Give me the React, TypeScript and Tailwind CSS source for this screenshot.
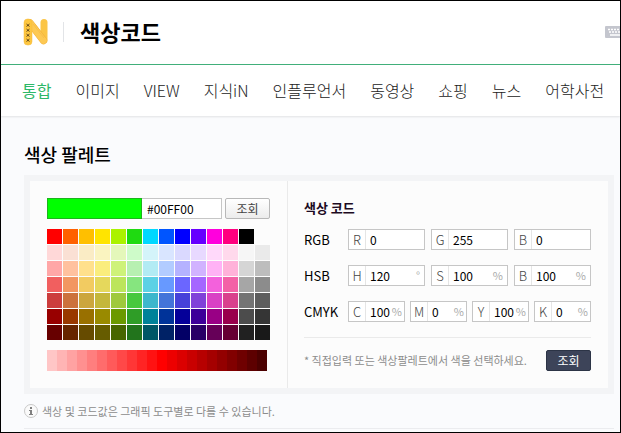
import { useState } from 'react'
import clsx from 'clsx'

const TABS = ['통합', '이미지', 'VIEW', '지식iN', '인플루언서', '동영상', '쇼핑', '뉴스', '어학사전']

const PALETTE = [
  ['#ff0000', '#ff6000', '#ffbf00', '#ffe400', '#abf200', '#1fda11', '#00d8ff', '#0055ff', '#0000ff', '#6600ff', '#ff00dd', '#ff007f', '#000000', '#ffffff'],
  ['#ffd8d8', '#fae0d4', '#faecc5', '#faf4c0', '#e4f7ba', '#cefbc9', '#d4f4fa', '#d9e5ff', '#dad9ff', '#e8d9ff', '#ffd9fa', '#ffd9ec', '#f6f6f6', '#eaeaea'],
  ['#ffa7a7', '#ffc19e', '#ffe08c', '#faed7d', '#cef279', '#b7f0b1', '#b2ebf4', '#b2ccff', '#b5b2ff', '#d1b2ff', '#ffb2f5', '#ffb2d9', '#d5d5d5', '#bdbdbd'],
  ['#f15f5f', '#f29661', '#f2cb61', '#e5d85c', '#bce55c', '#86e57f', '#5cd1e5', '#6799ff', '#6b66ff', '#a566ff', '#f361dc', '#f361a6', '#a6a6a6', '#8c8c8c'],
  ['#cc3d3d', '#cc723d', '#cca63d', '#c4b73b', '#9fc93c', '#47c83e', '#3db7cc', '#4374d9', '#4641d9', '#8041d9', '#d941c5', '#d9418d', '#747474', '#5d5d5d'],
  ['#980000', '#993800', '#997000', '#998a00', '#6b9900', '#2f9d27', '#008299', '#003399', '#050099', '#3d0099', '#990085', '#99004c', '#4c4c4c', '#353535'],
  ['#670000', '#662500', '#664b00', '#665c00', '#476600', '#22741c', '#005766', '#002266', '#030066', '#290066', '#660058', '#660033', '#212121', '#191919'],
]

const SHADES = [
  '#ffc6c6', '#ffb4b4', '#ffa2a2', '#ff9090', '#ff7e7e', '#ff6c6c', '#ff5a5a', '#ff4848', '#ff3636', '#ff2424', '#ff1212',
  '#ff0000', '#ed0000', '#db0000', '#c90000', '#b70000', '#a50000', '#930000', '#810000', '#6f0000', '#5d0000', '#4b0000',
]

const CODES = [
  { name: 'RGB', fields: [{ key: 'R', value: '0' }, { key: 'G', value: '255' }, { key: 'B', value: '0' }] },
  { name: 'HSB', fields: [{ key: 'H', value: '120', unit: '°' }, { key: 'S', value: '100', unit: '%' }, { key: 'B', value: '100', unit: '%' }] },
  { name: 'CMYK', fields: [{ key: 'C', value: '100', unit: '%' }, { key: 'M', value: '0', unit: '%' }, { key: 'Y', value: '100', unit: '%' }, { key: 'K', value: '0', unit: '%' }] },
]

function Logo() {
  return (
    <svg width="26" height="28" viewBox="0 0 26 28" aria-label="N">
      <rect x="17.500" y="1" width="7" height="24" rx="3.500" fill="#fbc546" />
      <path d="M7 5L20.500 22.500" stroke="#f3b33a" strokeWidth="7.500" strokeLinecap="round" />
      <path d="M7 5L20.500 22.500" stroke="#fdc953" strokeWidth="6.500" strokeLinecap="round" />
      <path d="M10 6l11 14M12 6l10 13" stroke="#f5b740" strokeWidth=".6" />
      <rect x="1" y="1" width="8" height="26" rx="3.500" fill="#fdc640" stroke="#f5b83c" strokeWidth=".5" />
      <path d="M3.500 6l3 2.500m0-2.500l-3 2.500M3.500 11l3 2.500m0-2.500l-3 2.500M3.500 16l3 2.500m0-2.500l-3 2.500M3.500 21l3 2.500m0-2.500l-3 2.500" stroke="#3d2a10" strokeWidth=".8" />
    </svg>
  )
}

function KeyboardIcon() {
  return (
    <svg width="20" height="12" viewBox="0 0 20 12" aria-hidden="true">
      <rect width="20" height="12" rx="1" fill="#c4c6ce" />
      <path d="M3 3.500h14M4 6h13" stroke="#fff" strokeWidth="1.300" strokeDasharray="2 1" />
      <path d="M5 9h10" stroke="#fff" strokeWidth="1.500" />
    </svg>
  )
}

function InfoIcon() {
  return (
    <svg width="14" height="14" viewBox="0 0 14 14" aria-hidden="true">
      <circle cx="7" cy="7" r="6.500" fill="#fafafa" stroke="#c8c8c8" />
      <path d="M6 3h2v2H6zM5 6h3v4h1v1H5v-1h1V7H5z" fill="#808080" />
    </svg>
  )
}

function CodeField({ group, name, value, unit, narrow }: {
  group: string
  name: string
  value: string
  unit?: string
  narrow: boolean
}) {
  const [text, setText] = useState(value)
  const id = `${group}-${name}`

  return (
    <div className="flex h-[21px] min-w-0 flex-1 items-center border border-[#c6c6c6] bg-white">
      <label htmlFor={id} className="flex h-full w-[17px] shrink-0 items-center justify-center border-r border-[#e5e5e5] text-[13px] font-light text-[#444]">
        {name}
      </label>
      <input
        id={id}
        value={text}
        onChange={e => setText(e.target.value)}
        className="h-full w-0 min-w-0 flex-1 pl-1 text-xs text-black outline-none"
      />
      {unit && <span className={clsx('shrink-0 text-[11px] text-[#aaa]', narrow ? 'pr-0.5' : 'pr-1')}>{unit}</span>}
    </div>
  )
}

export default function App() {
  const [tab, setTab] = useState('통합')
  const [color, setColor] = useState('#00FF00')

  return (
    <div className="flex min-h-screen flex-col overflow-hidden border border-black bg-[#fafbfd] font-['Noto_Sans_CJK_KR',sans-serif] text-black">
      {/* Header */}
      <header className="flex h-16 items-center border-b border-[#42b07b] bg-white pb-0.5 pl-[22px]">
        <Logo />
        <h1 className="ml-[14px] flex h-5 items-center border-l border-[#e2e4e7] pl-4 text-[22px] font-bold">색상코드</h1>
        <div className="-mr-[5px] ml-auto">
          <KeyboardIcon />
        </div>
      </header>

      {/* Tabs */}
      <nav className="flex h-[51px] items-center gap-6 bg-white pb-0.5 pl-[21px] text-base shadow-[0_1px_2px_rgba(0,0,0,0.1)]">
        {TABS.map(t => (
          <button
            key={t}
            onClick={() => setTab(t)}
            className={clsx('shrink-0', t === tab ? 'text-[#2db868]' : 'font-light text-[#222]')}
          >
            {t}
          </button>
        ))}
      </nav>

      <main className="flex flex-1 flex-col pr-1.5 pl-[23px]">
        <h2 className="mt-[25px] text-lg leading-[27px] font-medium">색상 팔레트</h2>

        <div className="mt-[7px] flex border-6 border-[#f3f4f6] bg-[#fcfcfc]">
          {/* Palette */}
          <section className="shrink-0 px-[17px] py-[17px]">
            <div className="flex h-[21px]">
              <div className="w-[95px] border border-[#1cb51c]" style={{ backgroundColor: color }} />
              <input
                aria-label="색상 코드"
                value={color}
                onChange={e => setColor(e.target.value)}
                className="mr-[3px] w-20 border border-l-0 border-[#c6c6c6] bg-white pt-px pl-[5px] text-xs outline-none"
              />
              <button className="w-[45px] rounded-xs border border-[#b8b8b8] bg-linear-to-b from-white to-[#ececec] text-xs leading-[19px] text-[#444]">
                조회
              </button>
            </div>
            <div className="mt-2.5 grid w-[223px] grid-cols-14 gap-px">
              {PALETTE.flat().map(c => (
                <button
                  key={c}
                  aria-label={c}
                  onClick={() => setColor(c.toUpperCase())}
                  className={clsx('h-[15px]', c === '#ffffff' && 'opacity-0')}
                  style={{ backgroundColor: c }}
                />
              ))}
            </div>
            <div className="mt-2.5 flex h-[21px] w-[220px]">
              {SHADES.map(c => (
                <button key={c} aria-label={c} onClick={() => setColor(c.toUpperCase())} className="flex-1" style={{ backgroundColor: c }} />
              ))}
            </div>
          </section>

          {/* Codes */}
          <section className="min-w-0 flex-1 border-l border-[#eaeaea] pt-[17px] pr-[17px] pl-4">
            <h3 className="h-[31px] text-[13px] leading-5 font-bold text-[#1d0a22]">색상 코드</h3>
            <div className="flex flex-col gap-[15px]">
              {CODES.map(({ name, fields }) => (
                <div key={name} className="flex items-center">
                  <span className="w-11 shrink-0 text-[13px] leading-5">{name}</span>
                  <div className={clsx('flex flex-1', fields.length > 3 ? 'gap-[5px]' : 'gap-1.5')}>
                    {fields.map(f => (
                      <CodeField key={f.key} group={name} name={f.key} value={f.value} unit={f.unit} narrow={fields.length > 3} />
                    ))}
                  </div>
                </div>
              ))}
            </div>
            <div className="mt-[15px] flex items-center justify-between border-t border-[#eaeaea] pt-3">
              <p className="text-[11px] text-[#8c8c8c]">* 직접입력 또는 색상팔레트에서 색을 선택하세요.</p>
              <button className="h-[21px] w-[45px] shrink-0 rounded-xs border border-[#2c3446] bg-[#3d4459] text-xs leading-[19px] text-white">
                조회
              </button>
            </div>
          </section>
        </div>

        <p className="mt-2 flex h-[27px] items-start gap-1 border-b border-[#ebecef] pt-0.5 text-[11px] leading-[14px] text-[#8c8c8c]">
          <InfoIcon />
          색상 및 코드값은 그래픽 도구별로 다를 수 있습니다.
        </p>
      </main>
    </div>
  )
}
